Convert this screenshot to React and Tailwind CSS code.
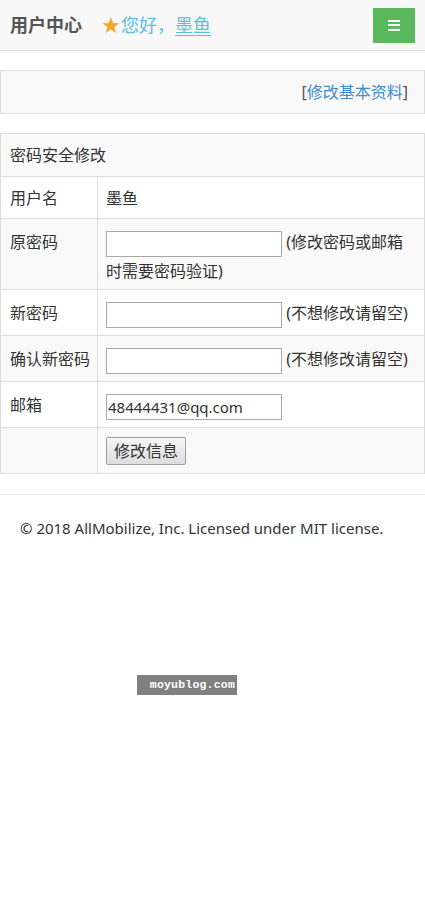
import React from 'react';

const FONT = { fontFamily: '"Noto Sans", "Noto Sans CJK SC", sans-serif' };

// One labelled row of the password form
function FormRow({ label, striped, height, children }) {
  return (
    <tr className={striped ? 'bg-[#f9f9f9]' : 'bg-white'}>
      <td
        className="w-[97px] border border-[#ddd] pl-[9px] pt-[9px] align-top leading-[28px]"
        style={{ height }}
      >
        {label}
      </td>
      <td className="border border-[#ddd] pl-[8px] pr-[6px] pt-[9px] align-top leading-[28px]">
        {children}
      </td>
    </tr>
  );
}

function TextInput({ value }) {
  return (
    <input
      type="text"
      defaultValue={value}
      className="inline-block h-[26px] w-[176px] border border-[#a9a9a9] bg-white px-[1px] align-middle text-[15px] leading-[24px] text-[#333] outline-none"
    />
  );
}

export default function App() {
  return (
    <div className="relative min-h-[905px] bg-white text-[16px] text-[#333]" style={FONT}>
      {/* Top navbar */}
      <div className="flex h-[51px] items-center justify-between border-b border-[#ddd] bg-[#f8f8f8] pl-[10px] pr-[10px]">
        <div className="flex items-center">
          <span className="text-[18px] font-bold text-[#555]">用户中心</span>
          <span className="ml-[20px] flex items-center text-[18px] text-[#5bc0de]">
            <span className="mr-[1px] text-[#f5a623]">★</span>
            您好，<span className="underline underline-offset-[3px]">墨鱼</span>
          </span>
        </div>
        <button className="flex h-[35px] w-[42px] items-center justify-center bg-[#5cb85c]">
          <span className="flex w-[12px] flex-col gap-[2.5px]">
            <span className="h-[2px] bg-white" />
            <span className="h-[2px] bg-white" />
            <span className="h-[2px] bg-white" />
          </span>
        </button>
      </div>

      {/* Basic info link panel */}
      <div className="mt-[19px] flex h-[44px] items-center justify-end border border-[#ddd] bg-[#f9f9f9] pr-[16px]">
        <span className="text-[#555]">
          [<a className="text-[#428bca]" href="#">修改基本资料</a>]
        </span>
      </div>

      {/* Password form */}
      <table className="mt-[19px] w-full border-collapse border border-[#ddd]">
        <tbody>
          <tr className="bg-[#f9f9f9]">
            <td colSpan={2} className="h-[43px] border border-[#ddd] pl-[9px] align-middle">
              密码安全修改
            </td>
          </tr>
          <tr className="bg-white">
            <td className="h-[42px] w-[97px] border border-[#ddd] pl-[9px] align-middle">用户名</td>
            <td className="border border-[#ddd] pl-[8px] align-middle">墨鱼</td>
          </tr>
          <FormRow label="原密码" striped height={71}>
            <TextInput /> (修改密码或邮箱时需要密码验证)
          </FormRow>
          <FormRow label="新密码" height={46}>
            <TextInput /> (不想修改请留空)
          </FormRow>
          <FormRow label="确认新密码" striped height={46}>
            <TextInput /> (不想修改请留空)
          </FormRow>
          <FormRow label="邮箱" height={46}>
            <TextInput value="48444431@qq.com" />
          </FormRow>
          <tr className="bg-[#f9f9f9]">
            <td className="h-[46px] border border-[#ddd]" />
            <td className="border border-[#ddd] pl-[8px] align-middle">
              <button className="h-[28px] rounded-[2px] border border-[#a0a0a0] bg-gradient-to-b from-[#f6f6f6] to-[#dedede] px-[7px] text-[16px] leading-[24px] text-[#333]">
                修改信息
              </button>
            </td>
          </tr>
        </tbody>
      </table>

      {/* Footer */}
      <div className="mt-[20px] border-t border-[#eee] pl-[20px] pt-[22px] text-[15px] text-[#333]">
        © 2018 AllMobilize, Inc. Licensed under MIT license.
      </div>

      {/* Watermark */}
      <div
        className="absolute left-[137px] top-[675px] flex h-[20px] w-[100px] items-center justify-end bg-[#808080] pr-[2px] text-[11.5px] font-bold tracking-[0.2px] text-white"
        style={{ fontFamily: '"Liberation Mono", monospace' }}
      >
        moyublog.com
      </div>
    </div>
  );
}
